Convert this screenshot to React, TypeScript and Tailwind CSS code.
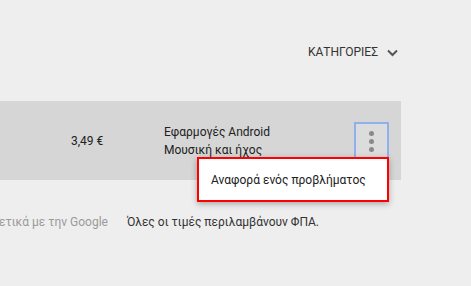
import React from "react";

export default function App() {
  return (
    <div
      className="relative w-[471px] h-[286px] overflow-hidden bg-[#eeeeee] text-[#212121]"
      style={{ fontFamily: "Roboto, 'Noto Sans', sans-serif" }}
    >
      <div className="h-[101px] flex items-start justify-end pr-[73px] pt-[45px]">
        <div className="flex items-center gap-[9px] text-[12px] leading-[14px] text-[#333333]">
          <span>ΚΑΤΗΓΟΡΙΕΣ</span>
          <svg width="11" height="8" viewBox="0 0 11 8" className="mt-[1px]">
            <path d="M1 1.5 L5.5 6 L10 1.5" fill="none" stroke="#555" strokeWidth="2" />
          </svg>
        </div>
      </div>
      <div className="relative w-[401px] h-[79px] bg-[#d6d6d6] flex items-start">
        <div className="ml-[71px] mt-[32px] text-[12px] leading-[16px] w-[93px]">3,49 €</div>
        <div className="mt-[22px] text-[12px] leading-[18px] w-[190px]">
          <div>Εφαρμογές Android</div>
          <div>Μουσική και ήχος</div>
        </div>
        <div className="mt-[21px] w-[35px] h-[40px] border-2 border-b-0 border-[#8fb0ea] bg-[#dcdcdc] flex flex-col items-center pt-[7px] gap-[3px]">
          <span className="w-[5px] h-[5px] rounded-full bg-[#8a8a8a]" />
          <span className="w-[5px] h-[5px] rounded-full bg-[#8a8a8a]" />
          <span className="w-[5px] h-[5px] rounded-full bg-[#8a8a8a]" />
        </div>
      </div>
      <div className="flex mt-[34px] text-[12px] leading-[16px]">
        <span className="w-[127px] whitespace-nowrap overflow-hidden flex justify-end pr-[19px] text-[#9a9a9a]">
          σχετικά με την Google
        </span>
        <span className="text-[#333333]">Όλες οι τιμές περιλαμβάνουν ΦΠΑ.</span>
      </div>
      <div className="absolute left-[197px] top-[157px] w-[192px] h-[45px] bg-white border-2 border-[#ff0000] shadow-[0_2px_6px_rgba(0,0,0,0.3)] flex items-center pl-[12px] text-[12px] text-[#212121]">
        Αναφορά ενός προβλήματος
      </div>
    </div>
  );
}
